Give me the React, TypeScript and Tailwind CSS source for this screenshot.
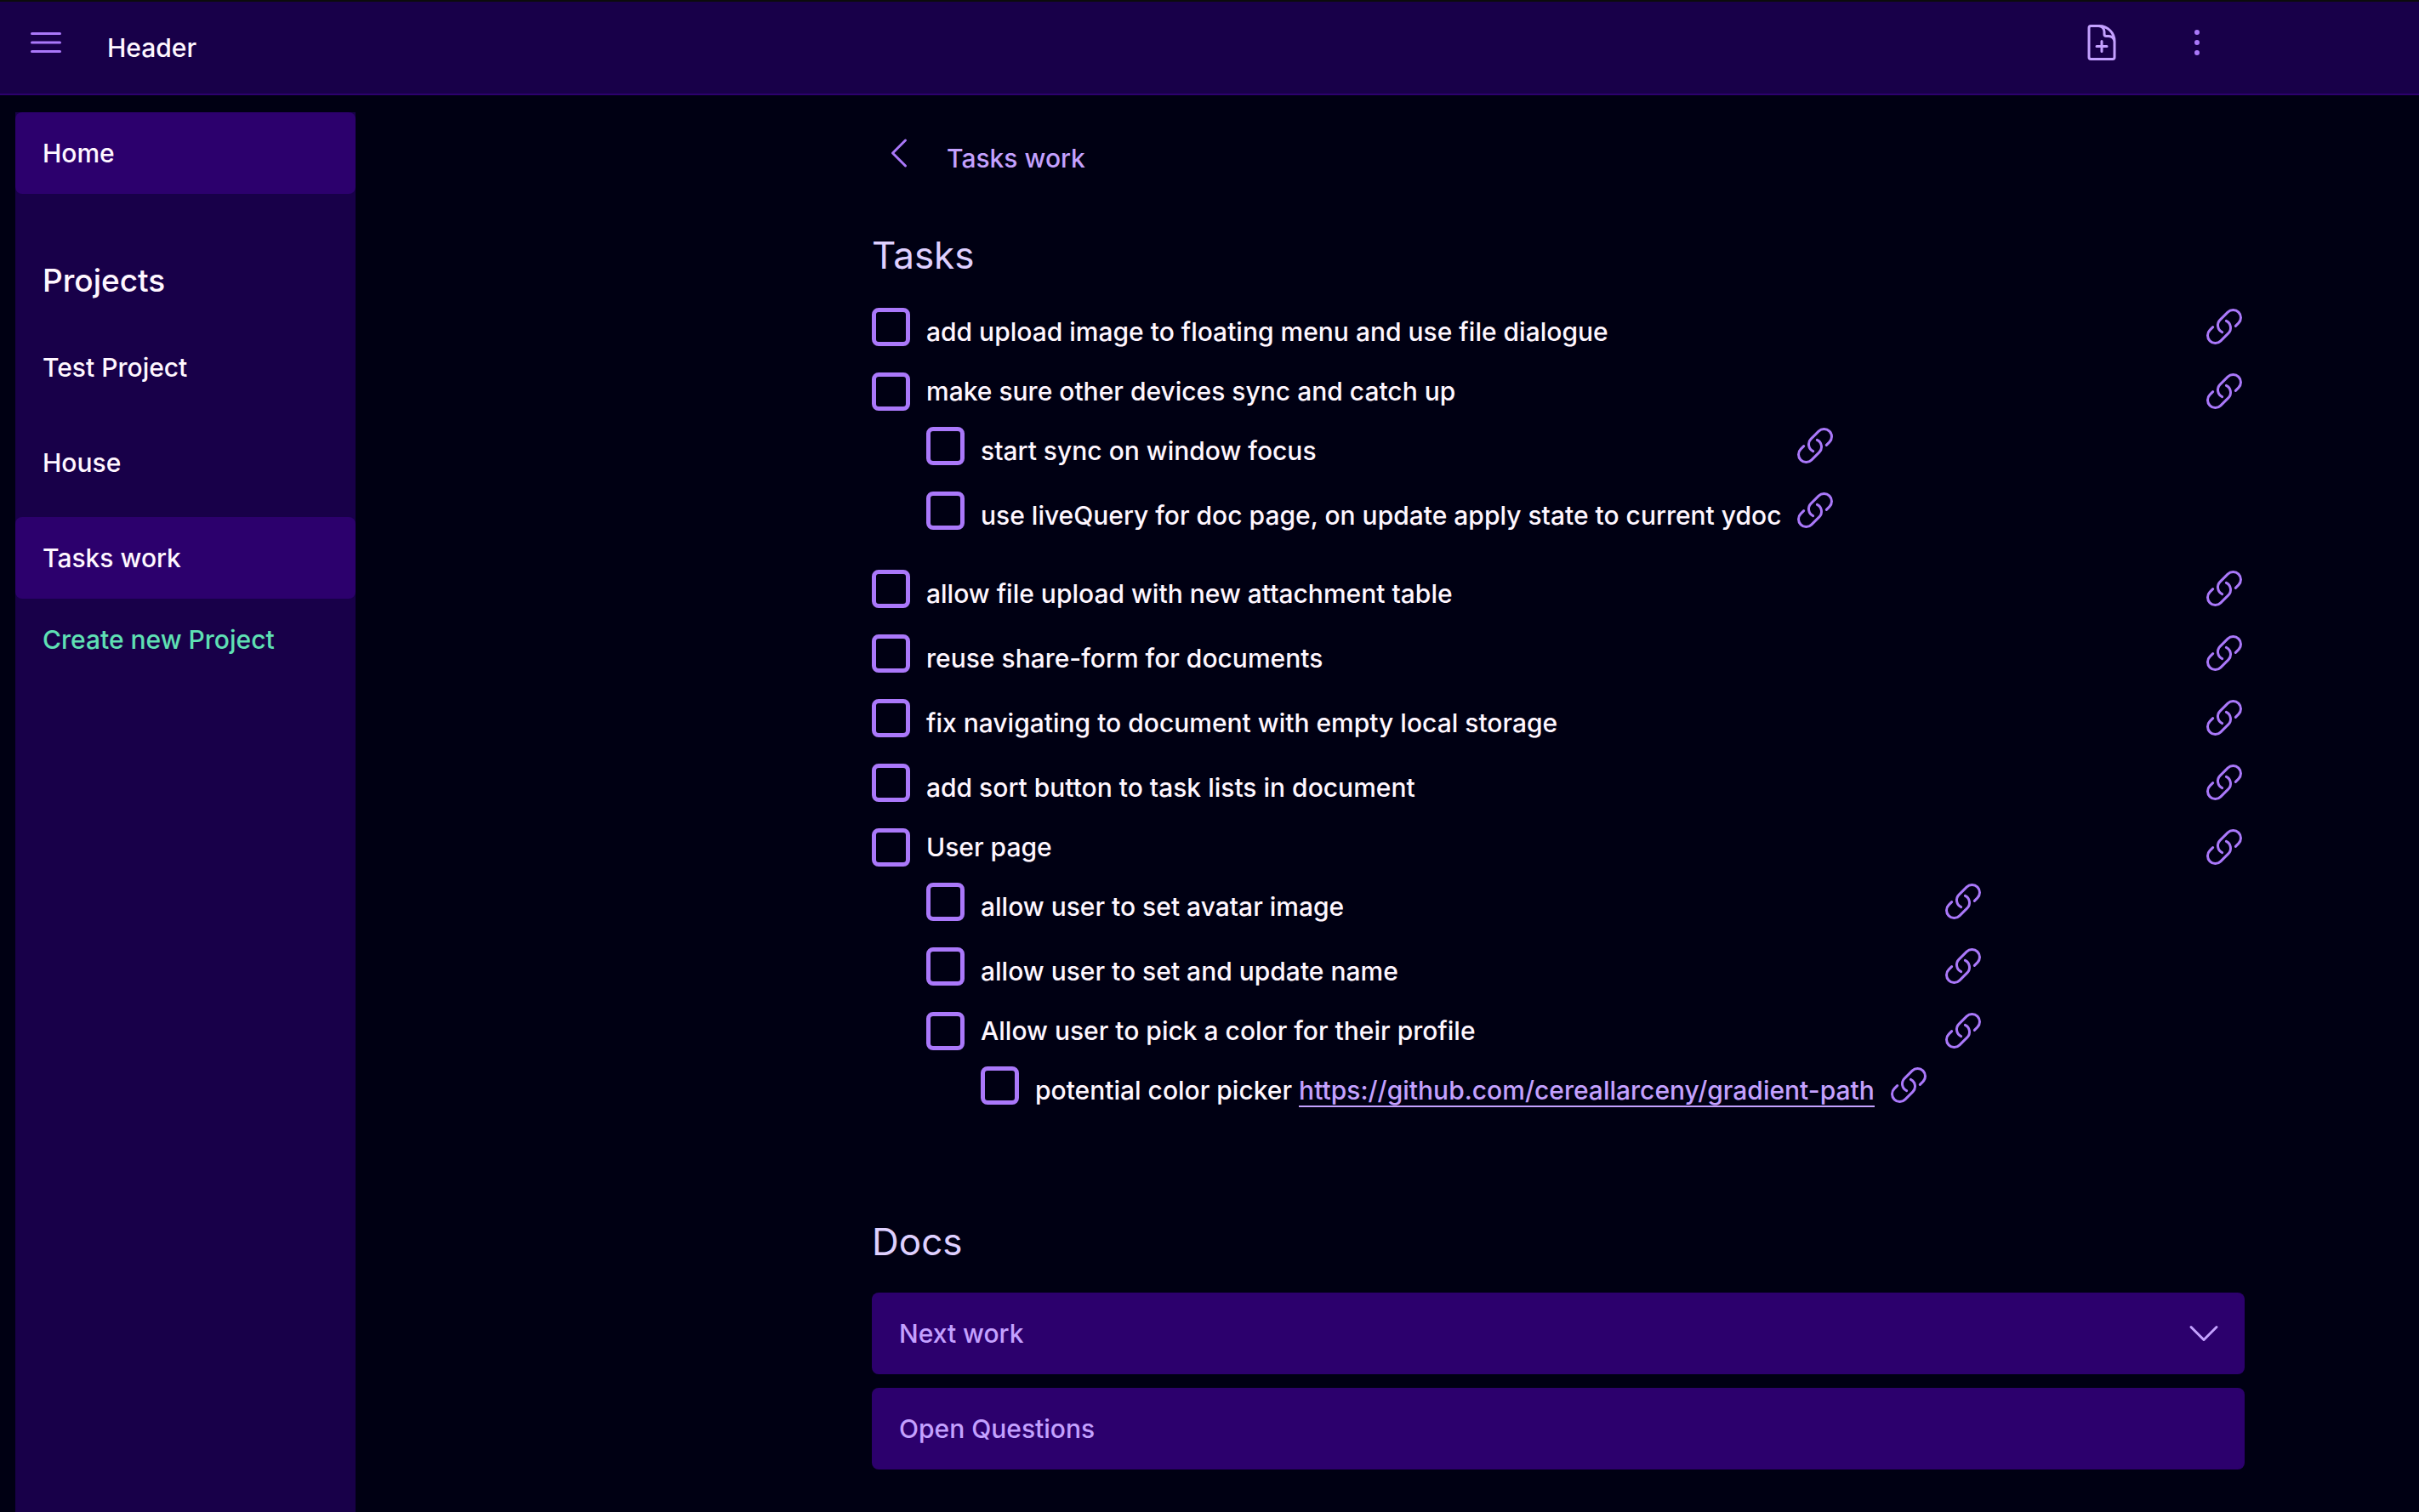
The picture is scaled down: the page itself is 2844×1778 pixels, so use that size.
import { useId } from "react";
import type { ReactNode } from "react";
import {
  HiOutlineBars3,
  HiOutlineChevronDown,
  HiOutlineChevronLeft,
  HiOutlineDocumentPlus,
  HiOutlineEllipsisVertical,
  HiOutlineLink,
} from "react-icons/hi2";

type Task = { text: string; href?: string; children?: Task[] };

const tasks: Task[] = [
  { text: "add upload image to floating menu and use file dialogue" },
  {
    text: "make sure other devices sync and catch up",
    children: [
      { text: "start sync on window focus" },
      { text: "use liveQuery for doc page, on update apply state to current ydoc" },
    ],
  },
  { text: "allow file upload with new attachment table" },
  { text: "reuse share-form for documents" },
  { text: "fix navigating to document with empty local storage" },
  { text: "add sort button to task lists in document" },
  {
    text: "User page",
    children: [
      { text: "allow user to set avatar image" },
      { text: "allow user to set and update name" },
      {
        text: "Allow user to pick a color for their profile",
        children: [
          {
            text: "potential color picker",
            href: "https://github.com/cereallarceny/gradient-path",
          },
        ],
      },
    ],
  },
];

const projects = [
  { name: "Test Project", active: false },
  { name: "House", active: false },
  { name: "Tasks work", active: true },
];

function TaskItem({ task }: { task: Task }) {
  const id = useId();
  return (
    <li className="flex items-start gap-4">
      <span className="flex size-12 shrink-0 items-start pt-0.5">
        <input
          id={id}
          type="checkbox"
          className="size-[45px] appearance-none rounded-lg border-5 border-[#aa78fa] checked:bg-[#aa78fa]"
        />
      </span>
      <div className="grow">
        <p className={task.children ? "whitespace-nowrap" : "whitespace-nowrap py-1.5"}>
          <label htmlFor={id}>{task.text}</label>
          {task.href && (
            <>
              {" "}
              <a href={task.href} className="border-b-2 border-[#c4a1ff] text-[#c4a1ff]">
                {task.href}
              </a>
            </>
          )}
        </p>
        {task.children && (
          <div className="my-4 flex">
            <TaskList tasks={task.children} />
          </div>
        )}
      </div>
      <button type="button" aria-label="Link task" className="shrink-0 text-[#aa78fa]">
        <HiOutlineLink className="size-12" />
      </button>
    </li>
  );
}

function TaskList({ tasks }: { tasks: Task[] }) {
  return (
    <ul className="flex grow-0 flex-col gap-4">
      {tasks.map((task) => (
        <TaskItem key={task.text} task={task} />
      ))}
    </ul>
  );
}

function NavLink({ active, children }: { active?: boolean; children: ReactNode }) {
  return (
    <a
      href="#"
      className={
        active
          ? "flex h-24 items-center rounded-lg bg-[#2c006d] px-8"
          : "flex h-24 items-center rounded-lg px-8"
      }
    >
      {children}
    </a>
  );
}

export default function App() {
  return (
    <div className="flex min-h-screen flex-col bg-[#000013] font-['Inter',sans-serif] text-[30px] leading-[48px] font-medium text-[#fff7ff]">
      <header className="flex h-28 items-start border-t-2 border-b-2 border-t-[#0c0c0c] border-b-[#2c006d] bg-[#180049] pt-6 pr-[237px] pl-[30px]">
        <button type="button" aria-label="Menu" className="text-[#aa78fa]">
          <HiOutlineBars3 className="size-12" />
        </button>
        <h1 className="mt-1.5 ml-12 grow">Header</h1>
        <div className="flex gap-16">
          <button type="button" aria-label="New document" className="text-[#c4a1ff]">
            <HiOutlineDocumentPlus className="size-12" />
          </button>
          <button type="button" aria-label="More options" className="text-[#aa78fa]">
            <HiOutlineEllipsisVertical className="size-12" />
          </button>
        </div>
      </header>

      <div className="flex grow pt-5 pl-[18px]">
        <nav className="w-[400px] shrink-0 bg-[#180049]">
          <NavLink active>Home</NavLink>
          <h2 className="mt-[72px] px-8 text-[37px] leading-[60px]">Projects</h2>
          <ul className="mt-6 flex flex-col gap-4">
            {projects.map((project) => (
              <li key={project.name}>
                <NavLink active={project.active}>{project.name}</NavLink>
              </li>
            ))}
          </ul>
          <button type="button" className="flex h-24 items-center px-8 text-[#5fe0b4]">
            Create new Project
          </button>
        </nav>

        <main className="grow pt-6 pr-[205px] pb-[50px] pl-[607px]">
          <div className="flex items-start gap-8 pl-2">
            <button type="button" aria-label="Back" className="text-[#aa78fa]">
              <HiOutlineChevronLeft className="size-12" />
            </button>
            <h2 className="mt-1.5 text-[#c4a1ff]">Tasks work</h2>
          </div>

          <section className="mt-[54px]">
            <h3 className="text-[44px] leading-[72px] font-normal text-[#dfd0ff]">Tasks</h3>
            <div className="mt-6">
              <TaskList tasks={tasks} />
            </div>
          </section>

          <section className="mt-20">
            <h3 className="text-[44px] leading-[72px] font-normal text-[#dfd0ff]">Docs</h3>
            <div className="mt-6 flex flex-col gap-4 text-[#c4a1ff]">
              <button
                type="button"
                className="flex h-24 items-center justify-between rounded-lg bg-[#2c006d] pr-6 pl-8"
              >
                Next work
                <HiOutlineChevronDown className="size-12" />
              </button>
              <button
                type="button"
                className="flex h-24 items-center rounded-lg bg-[#2c006d] pr-6 pl-8"
              >
                Open Questions
              </button>
            </div>
          </section>
        </main>
      </div>
    </div>
  );
}
